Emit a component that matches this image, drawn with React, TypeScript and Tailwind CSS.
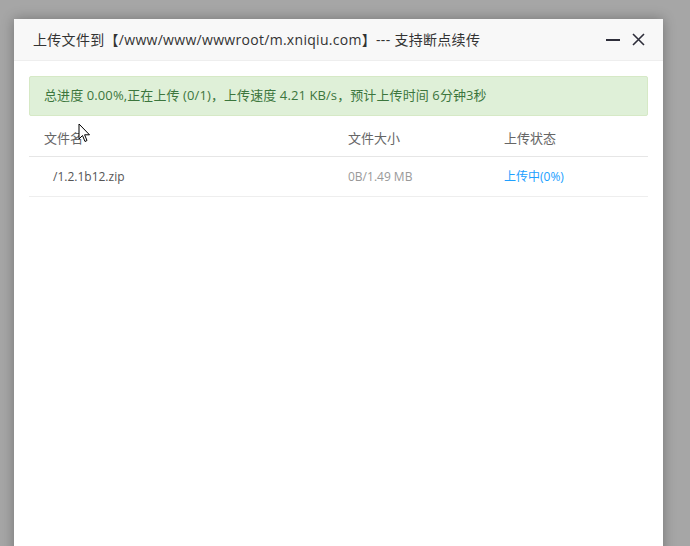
export default function App() {
  return (
    <div className="relative h-[546px] w-[690px] overflow-hidden bg-[#a6a6a6] font-['Open_Sans','Noto_Sans_CJK_SC',sans-serif]">
      <div className="ml-[14px] mt-[19px] flex h-[600px] w-[649px] flex-col bg-white shadow-[0_0_12px_rgba(0,0,0,0.3)]">
        <div className="flex h-[42px] items-center justify-between border-b border-[#eeeeee] bg-[#f8f8f8] pl-[19px] pr-[18px]">
          <span className="text-[14px] tracking-[0.3px] text-[#333333]">上传文件到【/www/www/wwwroot/m.xniqiu.com】--- 支持断点续传</span>
          <div className="flex items-center gap-[12px]">
            <span className="block h-[2px] w-[14px] bg-[#2e2e3a]" />
            <svg width="13" height="13" viewBox="0 0 13 13" className="text-[#2e2e3a]">
              <path d="M1 1L12 12M12 1L1 12" stroke="currentColor" strokeWidth="1.6" />
            </svg>
          </div>
        </div>
        <div className="px-[15px] pt-[15px]">
          <div className="flex h-[40px] items-center rounded-[2px] border border-[#d6e9c6] bg-[#dff0d8] px-[14px] text-[13px] tracking-[0.1px] text-[#3c763d]">
            总进度 0.00%,正在上传 (0/1)，上传速度 4.21 KB/s，预计上传时间 6分钟3秒
          </div>
          <div className="grid h-[41px] grid-cols-[304px_156px_1fr] items-end border-b border-[#e6e6e6] px-[15px] pb-[8px] text-[13px] text-[#666666]">
            <span>文件名</span>
            <span>文件大小</span>
            <span>上传状态</span>
          </div>
          <div className="grid h-[40px] grid-cols-[304px_156px_1fr] items-center border-b border-[#eeeeee] px-[15px] text-[12px]">
            <span className="pl-[9px] text-[#555555]">/1.2.1b12.zip</span>
            <span className="text-[#999999]">0B/1.49 MB</span>
            <span className="text-[#20a0ff]">上传中(0%)</span>
          </div>
        </div>
      </div>
      <svg className="absolute left-[78px] top-[123px]" width="13" height="20" viewBox="0 0 13 20">
        <path d="M1 1L1 16L4.5 12.5L7 18.5L9 17.5L6.6 11.8L11.5 11.8Z" fill="white" stroke="black" strokeWidth="1" strokeLinejoin="round" />
      </svg>
    </div>
  );
}
